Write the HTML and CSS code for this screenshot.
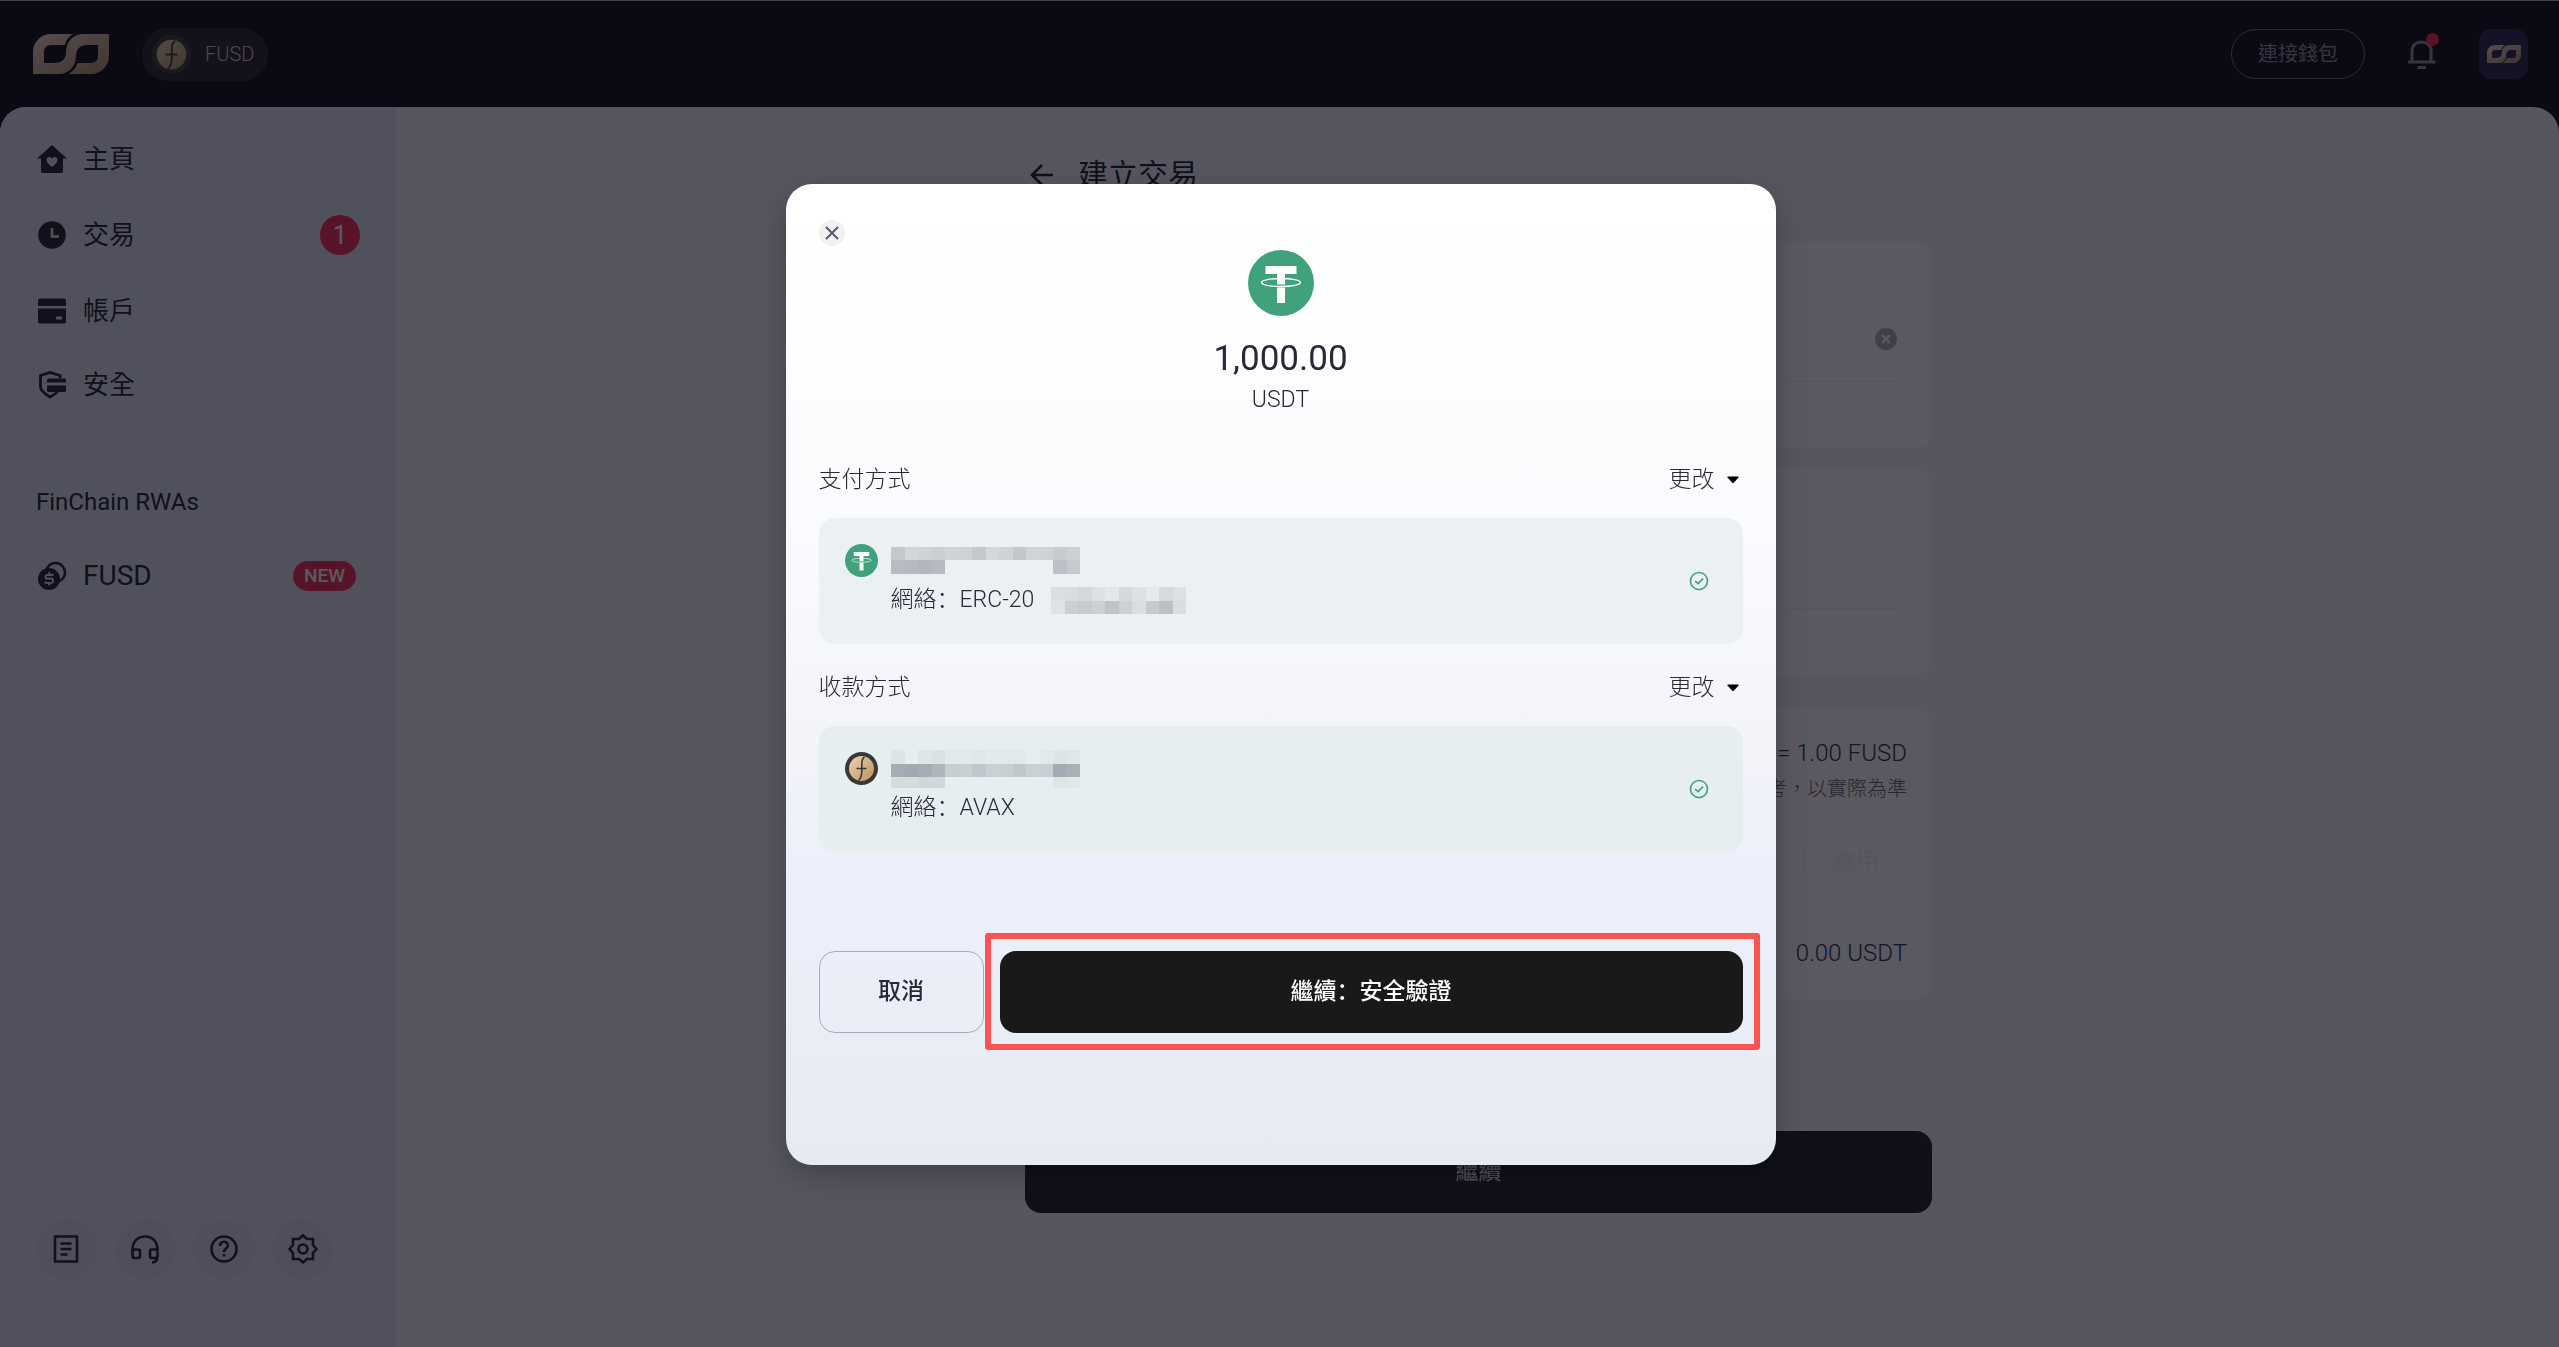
FILE: index.html
```html
<!DOCTYPE html>
<html lang="zh-Hant">
<head>
  <meta charset="UTF-8">
  <title>建立交易</title>
  <link rel="stylesheet" href="styles.css">
</head>
<body>
  <svg class="defs" width="0" height="0" aria-hidden="true">
    <defs>
      <linearGradient id="gold" x1="0" y1="0" x2="1" y2="1">
        <stop offset="0" stop-color="#f0dcc4"/>
        <stop offset="1" stop-color="#b18e68"/>
      </linearGradient>
      <linearGradient id="coin" x1="0" y1="0" x2="1" y2="1">
        <stop offset="0" stop-color="#ecd3b0"/>
        <stop offset="1" stop-color="#b8935f"/>
      </linearGradient>
      <symbol id="logo" viewBox="0 0 76 40">
        <path fill="url(#gold)" d="M0 40V18C0 8 8 0 18 0H40C36 2.5 33 6 32 11H18C14 11 11 14 11 18V29H22C29 29 33 25 33 18C33 8 40 0 50 0H76V22C76 32 68 40 58 40H35C39.5 38 43 34 44.5 29H58C62 29 65 26 65 22V11H54C47 11 43 15 43 22C43 32 36 40 26 40Z"/>
      </symbol>
      <symbol id="fusd" viewBox="0 0 33 33">
        <circle cx="16.5" cy="16.5" r="16.5" class="coin-rim"/>
        <circle cx="16.5" cy="16.5" r="12.5" fill="url(#coin)"/>
        <path class="coin-mark" d="M19.5 5C16.5 7 16.8 10 16.8 13V19C16.8 23 16.5 26 13.5 28.5M11.5 16.5H21.5" fill="none" stroke-width="1.6"/>
      </symbol>
      <symbol id="usdt" viewBox="0 0 66 66">
        <circle cx="33" cy="33" r="33" fill="#40a17c"/>
        <path fill="#fff" d="M17.5 16H48.5V24H37V34.5H29V24H17.5ZM29 37.5H37V53H29Z"/>
        <ellipse cx="33" cy="32.5" rx="19.5" ry="4" fill="none" stroke="#fff" stroke-width="1.3"/>
      </symbol>
      <symbol id="tick" viewBox="0 0 20 20">
        <circle cx="10" cy="10" r="8.5" fill="none" stroke="#40a17c" stroke-width="1.6"/>
        <path d="M6.2 10L9 12.6L14 7.6" fill="none" stroke="#40a17c" stroke-width="1.6"/>
      </symbol>
      <symbol id="caret" viewBox="0 0 12 8">
        <path d="M1 .5H11Q12.300 .5 11.5 1.5L7 6.6Q6 7.6 5 6.6L.5 1.5Q-.3 .5 1 .5Z"/>
      </symbol>
    </defs>
  </svg>

  <header class="topbar">
    <a class="brand" href="#" aria-label="FinChain"><svg width="76" height="40"><use href="#logo"/></svg></a>
    <a class="token-pill" href="#">
      <svg width="39" height="39"><use href="#fusd"/></svg>
      FUSD
    </a>
    <button class="wallet-btn">連接錢包</button>
    <button class="bell" aria-label="通知">
      <svg width="30" height="30" viewBox="0 0 30 30" fill="none" stroke="currentColor" stroke-width="3">
        <path d="M5 22V12C5 6 9.5 3 14.5 3S24 6 24 12V22M1 23H28.5M10.5 28.5H19"/>
      </svg>
      <span class="dot"></span>
    </button>
    <a class="avatar" href="#" aria-label="個人"><svg width="34" height="18"><use href="#logo"/></svg></a>
  </header>

  <div class="shell">
    <aside class="sidebar">
      <nav>
        <a class="nav-item" href="#">
          <svg width="30" height="30" viewBox="0 0 30 30"><path fill="currentColor" fill-rule="evenodd" d="M15 1L30 14.5H26V27Q26 29 24.5 29H5.5Q4 29 4 27V14.5H0ZM15 23C12 20.5 9.5 18.5 9.5 16C9.5 12.5 13.5 12 15 14.8C16.5 12 20.5 12.5 20.5 16C20.5 18.5 18 20.5 15 23Z"/></svg>
          主頁
        </a>
        <a class="nav-item" href="#">
          <svg width="30" height="30" viewBox="0 0 30 30"><circle cx="15" cy="15" r="13.8" fill="currentColor"/><path d="M15 8V16.5H22" fill="none" stroke="#e0e5f5" stroke-width="2.6"/></svg>
          交易
          <span class="count">1</span>
        </a>
        <a class="nav-item" href="#">
          <svg width="30" height="30" viewBox="0 0 30 30"><path fill="currentColor" fill-rule="evenodd" d="M3 2.5H27Q29 2.5 29 4.5V10H1V4.5Q1 2.5 3 2.5ZM1 12.5H29V25.5Q29 27.5 27 27.5H3Q1 27.5 1 25.5ZM19 20.5V23.5H25V20.5Z"/></svg>
          帳戶
        </a>
        <a class="nav-item" href="#">
          <svg width="30" height="30" viewBox="0 0 30 30"><path d="M23 8V5.5L13 2.5L3.5 5.5V17C3.5 21 8 24 13 27C16 25.5 19 23.5 21 21" fill="none" stroke="currentColor" stroke-width="2.8"/><path fill="currentColor" d="M11.5 8.5H27.5Q29 8.5 29 10V12.5H10V10Q10 8.5 11.5 8.5ZM10 15.5H29V20.5Q29 22 27.5 22H11.5Q10 22 10 20.5Z"/></svg>
          安全
        </a>
        <h2 class="nav-title">FinChain RWAs</h2>
        <a class="nav-item token-item" href="#">
          <svg width="30" height="30" viewBox="0 0 30 30"><circle cx="18.5" cy="11.5" r="9.5" fill="none" stroke="currentColor" stroke-width="2.4"/><circle cx="12" cy="18" r="11" fill="currentColor"/><path d="M15.5 15V14H9.5Q8.5 14 8.5 15.8Q8.5 17.5 10 17.5H14.5Q16 17.5 16 19.7Q16 21.8 14.5 21.8H8.5V20.5M12.3 11V14M12.3 22V24.5" fill="none" stroke="#e0e5f5" stroke-width="1.8"/></svg>
          FUSD
          <span class="new-tag">NEW</span>
        </a>
      </nav>
      <div class="tools">
        <button aria-label="文件"><svg width="30" height="30" viewBox="0 0 30 30"><path d="M4 2.5H26V27.5H4ZM9.5 9.5H20.5M9.5 15H20.5M9.5 20.5H16.5"/></svg></button>
        <button aria-label="客服"><svg width="30" height="30" viewBox="0 0 30 30"><path d="M2.5 16C2.5 7 8 2.5 15 2.5S27.5 7 27.5 16V22Q27.5 28.5 22 28.5M2.5 15.5H8.5Q10 15.5 10 17V22Q10 24 8.5 24H4.5Q2.5 24 2.5 22ZM27.5 15.5H21.5Q20 15.5 20 17V22Q20 24 21.5 24H25.5Q27.5 24 27.5 22Z"/></svg></button>
        <button aria-label="說明"><svg width="30" height="30" viewBox="0 0 30 30"><circle cx="15" cy="15" r="12.5"/><path d="M11 12C11 6.5 19 6.5 19 11.5C19 14 15 14.5 15 18M15 20V22.5"/></svg></button>
        <button aria-label="設定"><svg width="30" height="30" viewBox="0 0 30 30"><path d="M15 1.5L19 5H25V11L28.5 15L25 19V25H19L15 28.5L11 25H5V19L1.5 15L5 11V5H11Z"/><circle cx="15" cy="15" r="4.5"/></svg></button>
      </div>
    </aside>

    <main class="content">
      <div class="trade">
        <h1 class="trade-title">
          <svg width="24" height="24" viewBox="0 0 24 24" fill="none" stroke="currentColor" stroke-width="2.6"><path d="M23 12H2M12 2L2 12L12 22"/></svg>
          建立交易
        </h1>
        <section class="panel amount-panel">
          <div class="amount-row">
            <button class="clear-btn" aria-label="清除"><svg width="10" height="10" viewBox="0 0 10 10"><path d="M1 1L9 9M9 1L1 9"/></svg></button>
          </div>
        </section>
        <section class="panel amount-panel">
          <div class="amount-row"></div>
        </section>
        <section class="panel summary">
          <p class="rate">= 1.00 FUSD</p>
          <p class="note">考，以實際為準</p>
          <button class="apply-btn" disabled>應用</button>
          <p class="total">0.00 USDT</p>
        </section>
        <button class="continue-btn">繼續</button>
      </div>
    </main>
  </div>

  <div class="overlay">
    <div class="dialog" role="dialog" aria-modal="true" lang="zh">
      <button class="close-btn" aria-label="關閉"><svg width="14" height="14" viewBox="0 0 14 14"><path d="M1 1L13 13M13 1L1 13"/></svg></button>
      <div class="asset">
        <svg width="66" height="66"><use href="#usdt"/></svg>
        <strong>1,000.00</strong>
        <span>USDT</span>
      </div>

      <div class="method-head">
        <h3>支付方式</h3>
        <button class="change-btn">更改 <svg width="12" height="8"><use href="#caret"/></svg></button>
      </div>
      <div class="method">
        <svg class="method-icon" width="33" height="33"><use href="#usdt"/></svg>
        <div class="method-info">
          <div class="method-name" id="payName"></div>
          <div class="network">網絡：ERC-20 <span class="masked" id="payAddress"></span></div>
        </div>
        <svg width="20" height="20"><use href="#tick"/></svg>
      </div>

      <div class="method-head">
        <h3>收款方式</h3>
        <button class="change-btn">更改 <svg width="12" height="8"><use href="#caret"/></svg></button>
      </div>
      <div class="method receive">
        <svg class="method-icon" width="33" height="33"><use href="#fusd"/></svg>
        <div class="method-info">
          <div class="method-name" id="receiveName"></div>
          <div class="network">網絡：AVAX</div>
        </div>
        <svg width="20" height="20"><use href="#tick"/></svg>
      </div>

      <div class="actions">
        <button class="cancel-btn">取消</button>
        <div class="primary-wrap">
          <button class="primary-btn">繼續：安全驗證</button>
          <span class="highlight"></span>
        </div>
      </div>
    </div>
  </div>

  <script src="mosaic.js"></script>
</body>
</html>
```
FILE: styles.css
```css
* {
  box-sizing: border-box;
}

body {
  margin: 0;
  min-height: 100vh;
  display: flex;
  flex-direction: column;
  background-color: #0c0a14;
  border-top: 1px solid #aeb0a8;
  color: #1c1d2a;
  font-family: Roboto, "Noto Sans CJK TC", sans-serif;
  font-size: 23px;
  line-height: 34px;
}

h1, h2, h3, p {
  margin: 0;
  font-weight: 400;
}

button {
  padding: 0;
  border: none;
  background: none;
  color: inherit;
  font: inherit;
  cursor: pointer;
}

a {
  color: inherit;
  text-decoration: none;
}

svg {
  display: block;
  flex: none;
}

.defs {
  position: absolute;
}

.coin-rim {
  fill: #3a3835;
}

.coin-mark {
  stroke: #3a3835;
}

/* top bar */
.topbar {
  height: 106px;
  display: flex;
  align-items: center;
  padding: 0 31px 0 33px;
}

.token-pill {
  display: flex;
  align-items: center;
  gap: 14px;
  height: 53px;
  margin: 0 auto 0 33px;
  padding: 0 14px 0 10px;
  border-radius: 27px;
  background-color: rgba(255, 255, 255, 0.1);
  color: #c8c9d0;
  font-size: 20px;
  font-weight: 300;
}

.wallet-btn {
  width: 134px;
  height: 50px;
  border: 1px solid #706f80;
  border-radius: 25px;
  color: #8d8e9c;
  font-size: 20px;
}

.bell {
  position: relative;
  margin: 0 42px;
  color: #8d8e9c;
}

.dot {
  position: absolute;
  top: -6px;
  right: -2px;
  width: 13px;
  height: 13px;
  border-radius: 50%;
  background-color: #f62952;
}

.avatar {
  display: flex;
  align-items: center;
  justify-content: center;
  width: 49px;
  height: 50px;
  border-radius: 13px;
  background-color: #282649;
}

/* page body */
.shell {
  flex: 1;
  display: flex;
  border-radius: 26px 26px 0 0;
  background-color: #f0f4fb;
  overflow: hidden;
}

.sidebar {
  width: 396px;
  display: flex;
  flex-direction: column;
  justify-content: space-between;
  padding: 16px 36px 68px;
  background-color: #e0e5f5;
}

.sidebar nav {
  display: flex;
  flex-direction: column;
  gap: 2px;
}

.nav-item {
  display: flex;
  align-items: center;
  gap: 16px;
  padding: 18px 0 18px 1px;
  font-size: 26px;
  line-height: 36px;
}

.token-item {
  font-size: 28px;
}

.count {
  width: 40px;
  height: 40px;
  margin-left: auto;
  border-radius: 50%;
  background-color: #f62952;
  color: #fff;
  line-height: 40px;
  text-align: center;
}

.nav-title {
  margin: 61px 0 18px;
  font-size: 24px;
  line-height: 36px;
}

.new-tag {
  height: 30px;
  margin: 0 4px 0 auto;
  padding: 0 11px;
  border-radius: 15px;
  background-color: #f62952;
  color: #fff;
  font-size: 19px;
  font-weight: 500;
  line-height: 30px;
}

.tools {
  display: flex;
  gap: 19px;
}

.tools button {
  width: 60px;
  height: 60px;
  display: flex;
  align-items: center;
  justify-content: center;
  border-radius: 50%;
  background-color: #dce0ef;
}

.tools svg {
  fill: none;
  stroke: currentColor;
  stroke-width: 2.6;
}

.content {
  flex: 1;
  padding: 46px 32px 46px 34px;
}

.trade {
  max-width: 907px;
  margin: 0 auto;
}

.trade-title {
  display: flex;
  align-items: center;
  gap: 24px;
  margin-bottom: 45px;
  padding-left: 5px;
  font-size: 30px;
  line-height: 44px;
}

.panel {
  border-radius: 16px;
  background-color: #fffafe;
}

.amount-panel {
  height: 206px;
  margin-bottom: 21px;
  padding: 0 33px;
}

.amount-row {
  height: 140px;
  display: flex;
  align-items: flex-end;
  justify-content: flex-end;
  padding: 0 2px 31px;
  border-bottom: 1px solid #f0edf2;
}

.clear-btn {
  width: 22px;
  height: 22px;
  display: flex;
  align-items: center;
  justify-content: center;
  border-radius: 50%;
  background-color: #b0aeba;
}

.clear-btn svg {
  stroke: #fff;
  stroke-width: 2.4;
}

.summary {
  display: flex;
  flex-direction: column;
  align-items: flex-end;
  margin-top: 33px;
  padding: 28px 25px 29px;
  font-weight: 300;
}

.rate,
.total {
  color: #2b2c44;
  font-size: 24px;
  font-weight: 300;
}

.note {
  margin: 4px 0 33px;
  color: #5f606c;
  font-size: 20px;
  font-weight: 300;
  line-height: 30px;
}

.apply-btn {
  width: 103px;
  height: 49px;
  margin-bottom: 50px;
  border: 1px solid #f7f2f7;
  border-radius: 16px;
  color: #f1edf3;
}

.continue-btn {
  width: 100%;
  height: 82px;
  margin-top: 132px;
  border-radius: 16px;
  background-color: #1e1c28;
  color: #e0e0e4;
}

/* confirm dialog */
.overlay {
  position: fixed;
  inset: 0;
  display: flex;
  align-items: center;
  justify-content: center;
  padding: 2px 0 0 2px;
  background-color: rgba(12, 10, 20, 0.68);
}

.dialog {
  width: 990px;
  max-width: 100%;
  padding: 36px 33px 132px;
  border-radius: 26px;
  background: linear-gradient(#fff, #fbfdff 20%, #f8fafd 38%, #f3f4f9 56%, #edf0fa 69%, #e6ebf3);
  box-shadow: 0 10px 30px rgba(0, 0, 0, 0.25);
  color: #28283a;
  font-family: Roboto, "Noto Sans CJK SC", sans-serif;
}

.close-btn {
  width: 26px;
  height: 26px;
  display: flex;
  align-items: center;
  justify-content: center;
  border-radius: 50%;
  background-color: #f1f1f2;
}

.close-btn svg {
  stroke: #5a5a6c;
  stroke-width: 2;
}

.asset {
  display: flex;
  flex-direction: column;
  align-items: center;
  margin: 4px 0 46px;
  font-weight: 300;
}

.asset strong {
  margin-top: 19px;
  font-size: 35px;
  font-weight: 400;
  line-height: 48px;
}

.method-head {
  display: flex;
  justify-content: space-between;
  margin-bottom: 21px;
  font-weight: 300;
}

.method-head h3 {
  font-size: 23px;
  font-weight: 300;
}

.change-btn {
  display: flex;
  align-items: center;
  gap: 12px;
  padding-right: 4px;
  font-weight: 300;
}

.method {
  display: flex;
  align-items: center;
  gap: 13px;
  margin-bottom: 27px;
  padding: 26px 34px 27px 26px;
  border-radius: 16px;
  background-color: #ebf1f3;
}

.receive {
  background-color: #e6eef0;
}

.method-icon {
  align-self: flex-start;
}

.method-info {
  flex: 1;
}

.method-name {
  height: 33px;
  display: flex;
  align-items: center;
  margin-bottom: 6px;
}

.network {
  display: flex;
  align-items: center;
  font-weight: 300;
}

.masked {
  margin-left: 17px;
}

.actions {
  display: flex;
  gap: 16px;
  margin-top: 99px;
  font-weight: 500;
}

.cancel-btn {
  width: 165px;
  border: 1px solid #a9abba;
  border-radius: 16px;
}

.primary-wrap {
  position: relative;
  flex: 1;
}

.primary-btn {
  width: 100%;
  height: 82px;
  border-radius: 16px;
  background-color: #19191a;
  color: #fff;
}

.highlight {
  position: absolute;
  inset: -18px -17px -17px -15px;
  border: 6px solid #fb5252;
  border-radius: 3px;
  pointer-events: none;
}
```
FILE: mosaic.js
```javascript
// masked account details, one array per row of cells ('' leaves a cell open)
const masks = {
  payName: {
    heights: [13, 14],
    rows: [
      ['c4c8cd', 'd2d6da', 'ced3d7', 'cacfd3', 'cfd4d8', 'cdd2d6', 'c4c8cc', 'd3d8db', 'ced3d7', 'c3c7cb', 'cfd4d8', 'ced3d7', 'c6cbcf', 'cccfd4'],
      ['b9bcc4', 'b5b9c1', 'b2b6c0', 'b7bac1', '', '', '', '', '', '', '', '', 'bcc0ca', 'c5cace']
    ]
  },
  payAddress: {
    heights: [14, 13],
    rows: [
      ['dbdfe2', 'd8dde0', 'd3d8db', 'dce1e4', 'e2e7e9', 'd4d9dc', 'dce1e4', 'e4e9eb', 'd5dadd', 'dbe0e3'],
      ['dee3e5', 'cacfd3', 'c6cbcf', 'ccd1d4', 'bfc4c8', 'ccd1d5', 'd9dee1', 'c5cace', 'bdc1c5', 'd8dde0']
    ]
  },
  receiveName: {
    heights: [14, 13, 11],
    rows: [
      ['dde4e6', '', 'e0e6e8', 'dae1e3', 'e2e9eb', 'e2e9eb', 'e0e7e9', 'e3eaec', 'e2e9eb', 'e2e9eb', '', 'e2e9eb', 'dde4e6', 'e0e7e9'],
      ['a7abb4', 'a4a8b2', 'a7abb3', 'b0b5bc', 'c8cdd2', 'cacfd4', 'c1c6ce', 'cad0d5', 'cacfd4', 'c2c7cd', 'cbd0d5', 'c9cfd4', 'a6aab4', 'a9b0b7'],
      ['d5dbde', 'd5dcdf', 'd1d8da', 'd1d8da', '', '', '', '', '', '', '', '', 'dfe6e9', 'e1e8ea']
    ]
  }
};

const cell = 13.5;

for (const [id, mask] of Object.entries(masks)) {
  const width = Math.ceil(mask.rows[0].length * cell);
  const height = mask.heights.reduce((a, b) => a + b, 0);
  let y = 0;
  let rects = '';
  mask.rows.forEach((row, r) => {
    row.forEach((color, c) => {
      if (color) rects += `<rect x="${c * cell}" y="${y}" width="${cell}" height="${mask.heights[r]}" fill="#${color}"/>`;
    });
    y += mask.heights[r];
  });
  document.getElementById(id).innerHTML =
    `<svg width="${width}" height="${height}" shape-rendering="crispEdges">${rects}</svg>`;
}
```
